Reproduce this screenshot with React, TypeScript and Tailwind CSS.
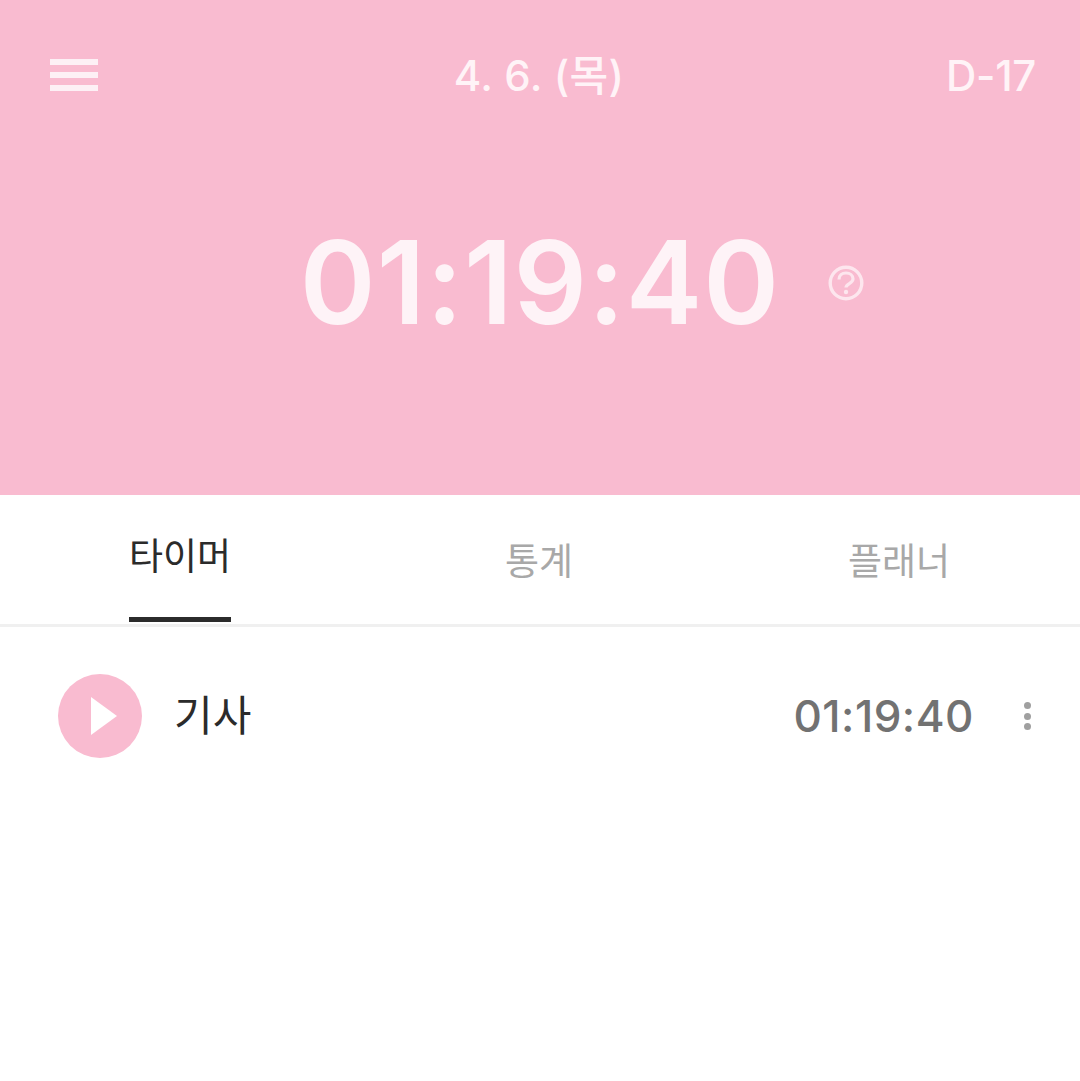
const font = { fontFamily: 'Inter, "Noto Sans CJK KR", sans-serif' };

function MenuIcon() {
  return (
    <div className="flex w-[48px] flex-col gap-[7px]">
      <div className="h-[6px] bg-[#fdf0f5]" />
      <div className="h-[6px] bg-[#fdf0f5]" />
      <div className="h-[6px] bg-[#fdf0f5]" />
    </div>
  );
}

function HelpIcon() {
  return (
    <svg width="36" height="36" viewBox="0 0 36 36" fill="none" stroke="#fde6ee" strokeWidth="3.4">
      <circle cx="18" cy="18" r="15.8" />
      <path d="M11 14.5c0-4 3-6.5 7-6.5s7 2.5 7 6c0 4.6-7 4.4-7 8.5" strokeWidth="3.2" />
      <circle cx="18" cy="27" r="2.2" fill="#fde6ee" stroke="none" />
    </svg>
  );
}

function Tab({ label, active }: { label: string; active?: boolean }) {
  return (
    <div className="flex flex-col items-center">
      <div
        className={
          active
            ? "flex h-[127px] flex-col items-center border-b-[5px] border-[#2b2b2b] pt-[37px] text-[#2b2b2b]"
            : "pt-[42px] text-[#a8a8a8]"
        }
      >
        <span className="text-[37px] leading-[50px]">{label}</span>
      </div>
    </div>
  );
}

export default function App() {
  return (
    <div className="flex h-[1081px] w-[1080px] flex-col bg-white" style={font}>
      <header className="h-[495px] bg-[#f9bbd0] text-[#fff3f7]">
        <div className="grid h-[150px] grid-cols-3 items-start pl-[50px] pr-[44px] pt-[50px]">
          <div className="pt-[9px]">
            <MenuIcon />
          </div>
          <div className="mr-[8px] whitespace-nowrap text-center text-[42px] font-medium leading-[52px] tracking-[0.3px]">4. 6. (목)</div>
          <div className="text-right text-[42px] font-medium leading-[52px] tracking-[-0.3px]">D-17</div>
        </div>
        <div className="relative flex justify-center pt-[73px]">
          <div className="text-[115px] font-semibold leading-[120px] tracking-[1px] text-[#fef3f7]">01:19:40</div>
          <div className="absolute left-[828px] top-[115px]">
            <HelpIcon />
          </div>
        </div>
      </header>

      <nav className="grid h-[132px] grid-cols-[360px_358px_362px] border-b-[3px] border-[#f0f0f0]">
        <Tab label="타이머" active />
        <Tab label="통계" />
        <Tab label="플래너" />
      </nav>

      <div className="flex items-center pl-[58px] pr-[49px] pt-[47px]">
        <div className="flex h-[84px] w-[84px] items-center justify-center rounded-full bg-[#f9bbd0]">
          <svg width="26" height="38" viewBox="0 0 26 38" className="ml-[8px]">
            <path d="M0 0L26 19L0 38Z" fill="#ffffff" />
          </svg>
        </div>
        <div className="ml-[32px] flex-1 text-[42px] leading-[52px] text-[#2b2b2b]">기사</div>
        <div className="text-[44px] font-medium leading-[52px] tracking-[0.5px] text-[#727272]">01:19:40</div>
        <div className="ml-[50px] flex flex-col gap-[3.5px]">
          <div className="h-[7px] w-[7px] rounded-full bg-[#a0a0a0]" />
          <div className="h-[7px] w-[7px] rounded-full bg-[#a0a0a0]" />
          <div className="h-[7px] w-[7px] rounded-full bg-[#a0a0a0]" />
        </div>
      </div>
    </div>
  );
}
